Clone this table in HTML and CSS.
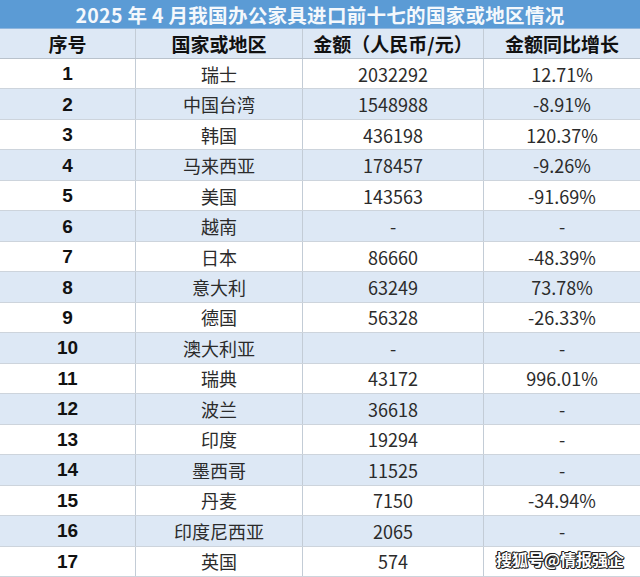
FILE: index.html
```html
<!DOCTYPE html>
<html lang="zh">
<head>
<meta charset="utf-8">
<link rel="stylesheet" href="styles.css">
</head>
<body>
<div class="sheet">
  <div class="title">2025 年 4 月我国办公家具进口前十七的国家或地区情况</div>
  <div class="row head"><div>序号</div><div>国家或地区</div><div>金额（人民币/元）</div><div>金额同比增长</div></div>
  <div class="row"><div class="n">1</div><div>瑞士</div><div>2032292</div><div>12.71%</div></div>
  <div class="row alt"><div class="n">2</div><div>中国台湾</div><div>1548988</div><div>-8.91%</div></div>
  <div class="row"><div class="n">3</div><div>韩国</div><div>436198</div><div>120.37%</div></div>
  <div class="row alt"><div class="n">4</div><div>马来西亚</div><div>178457</div><div>-9.26%</div></div>
  <div class="row"><div class="n">5</div><div>美国</div><div>143563</div><div>-91.69%</div></div>
  <div class="row alt"><div class="n">6</div><div>越南</div><div>-</div><div>-</div></div>
  <div class="row"><div class="n">7</div><div>日本</div><div>86660</div><div>-48.39%</div></div>
  <div class="row alt"><div class="n">8</div><div>意大利</div><div>63249</div><div>73.78%</div></div>
  <div class="row"><div class="n">9</div><div>德国</div><div>56328</div><div>-26.33%</div></div>
  <div class="row alt"><div class="n">10</div><div>澳大利亚</div><div>-</div><div>-</div></div>
  <div class="row"><div class="n">11</div><div>瑞典</div><div>43172</div><div>996.01%</div></div>
  <div class="row alt"><div class="n">12</div><div>波兰</div><div>36618</div><div>-</div></div>
  <div class="row"><div class="n">13</div><div>印度</div><div>19294</div><div>-</div></div>
  <div class="row alt"><div class="n">14</div><div>墨西哥</div><div>11525</div><div>-</div></div>
  <div class="row"><div class="n">15</div><div>丹麦</div><div>7150</div><div>-34.94%</div></div>
  <div class="row alt"><div class="n">16</div><div>印度尼西亚</div><div>2065</div><div>-</div></div>
  <div class="row"><div class="n">17</div><div>英国</div><div>574</div><div></div></div>
  <div class="mark">搜狐号@情报强企</div>
</div>
</body>
</html>
```
FILE: styles.css
```css
* { box-sizing: border-box; }
html, body { margin: 0; padding: 0; background: #fff; }
body { font-family: "Noto Sans CJK SC", "Noto Sans", sans-serif; color: #2b2b2b; }
.sheet { position: relative; width: 640px; height: 577px; overflow: hidden; }
.title {
  height: 29px;
  background: #5b9bd5;
  color: #f4f8fc;
  font-weight: bold;
  font-size: 19.5px;
  line-height: 29px;
  text-align: center;
  letter-spacing: 0.3px;
  border-bottom: 1px solid #8fb6de;
}
.row {
  display: grid;
  grid-template-columns: 136px 167px 181px 1fr;
  height: 30.47px;
  border-bottom: 1px solid #cdd4dc;
  background: #fff;
}
.row.alt, .row.head { background: #dde8f5; }
.row.head { height: 30px; font-weight: bold; color: #111; border-bottom-color: #b9c2cc; }
.row > div {
  display: flex;
  align-items: center;
  justify-content: center;
  border-right: 1px solid #c3ccd6;
  font-size: 18px;
  line-height: 1;
}
.row.head > div { font-size: 19px; }
.row > div:last-child { border-right: none; }
.row > .n { font-family: "Liberation Sans", "Noto Sans", sans-serif; font-weight: bold; color: #111; font-size: 19px; }
.mark {
  position: absolute;
  right: 16px;
  bottom: 6px;
  font-size: 16px;
  font-weight: bold;
  color: #fff;
  text-shadow: -1px 0 #222, 1px 0 #222, 0 -1px #222, 0 1px #222, 1px 1px #222, -1px -1px #222;
}
```
